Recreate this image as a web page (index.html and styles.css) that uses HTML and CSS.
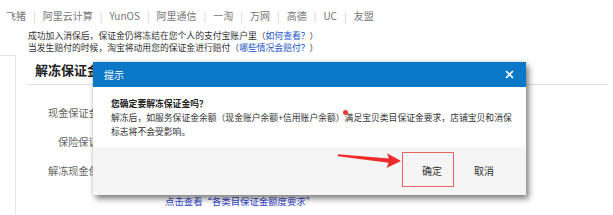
FILE: index.html
```html
<!DOCTYPE html>
<html lang="zh-CN">
<head>
<meta charset="utf-8">
<title>解冻保证金</title>
<link rel="stylesheet" href="styles.css">
</head>
<body>
<div class="nav">
  <span>飞猪</span><i>|</i><span>阿里云计算</span><i>|</i><span>YunOS</span><i>|</i><span>阿里通信</span><i>|</i><span>一淘</span><i>|</i><span>万网</span><i>|</i><span>高德</span><i>|</i><span>UC</span><i>|</i><span>友盟</span>
</div>
<div class="notice">
  <p>成功加入消保后，保证金仍将冻结在您个人的支付宝账户里（<a>如何查看？</a>）</p>
  <p>当发生赔付的时候，淘宝将动用您的保证金进行赔付（<a>哪些情况会赔付？</a>）</p>
</div>
<div class="main">
  <div class="rail"></div>
  <div class="content">
    <h2 class="title">解冻保证金</h2>
    <div class="row r1">现金保证金：</div>
    <div class="row r2">保险保证金：</div>
    <div class="row r3">解冻现金保证金：</div>
    <a class="link">点击查看“各类目保证金额度要求”</a>
  </div>
</div>

<div class="modal">
  <div class="modal-head">
    <span>提示</span>
    <svg class="close" width="9" height="9" viewBox="0 0 9 9"><path d="M1 1L8 8M8 1L1 8" stroke="#fff" stroke-width="1.6" fill="none"/></svg>
  </div>
  <div class="modal-body">
    <p class="q">您确定要解冻保证金吗？</p>
    <p>解冻后，如服务保证金余额（现金账户余额+信用账户余额）满足宝贝类目保证金要求，店铺宝贝和消保</p>
    <p>标志将不会受影响。</p>
  </div>
  <div class="modal-foot">
    <span class="btn ok">确定</span>
    <span class="btn cancel">取消</span>
  </div>
</div>

<span class="dot"></span>
<span class="mark"></span>
<svg class="arrow" width="70" height="20" viewBox="336 151 70 20"><path d="M338 154.3 L389 158.6 L387 153.2 L401 161 L386.5 168 L388.6 162.8 L338 156.2 Z" fill="#ef2b2b"/></svg>
</body>
</html>
```
FILE: styles.css
```css
* { box-sizing: border-box; }
html, body { margin: 0; padding: 0; background: #fff; }
body {
  width: 613px; height: 215px; overflow: hidden; position: relative;
  font-family: "Noto Sans CJK SC", "Noto Sans", sans-serif;
  color: #333;
}
p { margin: 0; }
.nav {
  height: 30px; display: flex; align-items: center;
  padding-left: 6px; font-size: 10px; color: #777;
}
.nav i { font-style: normal; color: #ccc; margin: 0 7px; font-size: 10px; }
.notice { padding-left: 28px; font-size: 8.8px; line-height: 12px; height: 25px; color: #333; }
.notice a { color: #1a55c8; }
.main { display: flex; }
.rail { width: 16px; border-top: 1px solid #e6e6e6; border-right: 1px solid #e6e6e6; height: 170px; flex: none; }
.content { margin-left: 12px; width: 579px; }
.title {
  margin: 0; font-size: 13px; font-weight: 700; color: #222;
  height: 30px; line-height: 29px; padding-left: 7px;
  border-bottom: 1px solid #ddd;
}
.row { font-size: 10.2px; color: #666; height: 29px; line-height: 14px; }
.r1 { padding-left: 20px; margin-top: 21px; }
.r2 { padding-left: 30px; }
.r3 { padding-left: 20px; }
.link { display: block; margin-top: 2px; padding-left: 137px; font-size: 9.4px; line-height: 12px; color: #3344cc; }

.modal {
  position: absolute; left: 93px; top: 62px; width: 433px; height: 133px;
  background: #fff;
  box-shadow: 3px 4px 6px rgba(0,0,0,0.45), 0 0 5px rgba(0,0,0,0.15);
  display: flex; flex-direction: column;
}
.modal-head {
  height: 25px; background: #0a77c7; color: #fff; font-size: 10px;
  display: flex; align-items: center; justify-content: space-between;
  padding: 0 12px 0 11px;
}
.modal-body { height: 60px; padding: 10px 0 0 18px; font-size: 8.8px; line-height: 14px; color: #333; }
.modal-body .q { font-weight: 700; color: #222; }
.modal-foot {
  flex: 1; background: #f5f5f5; display: flex; align-items: center; justify-content: flex-end;
  padding: 0 32px 0 0; gap: 32px; font-size: 10px; color: #333;
}
.btn { line-height: 14px; padding-top: 0; }

.dot { position: absolute; left: 342.5px; top: 109.5px; width: 5px; height: 5px; border-radius: 50%; background: #f03434; }
.mark { position: absolute; left: 402px; top: 152px; width: 52px; height: 35px; border: 1.5px solid #ea6464; }
.arrow { position: absolute; left: 336px; top: 151px; }
```
